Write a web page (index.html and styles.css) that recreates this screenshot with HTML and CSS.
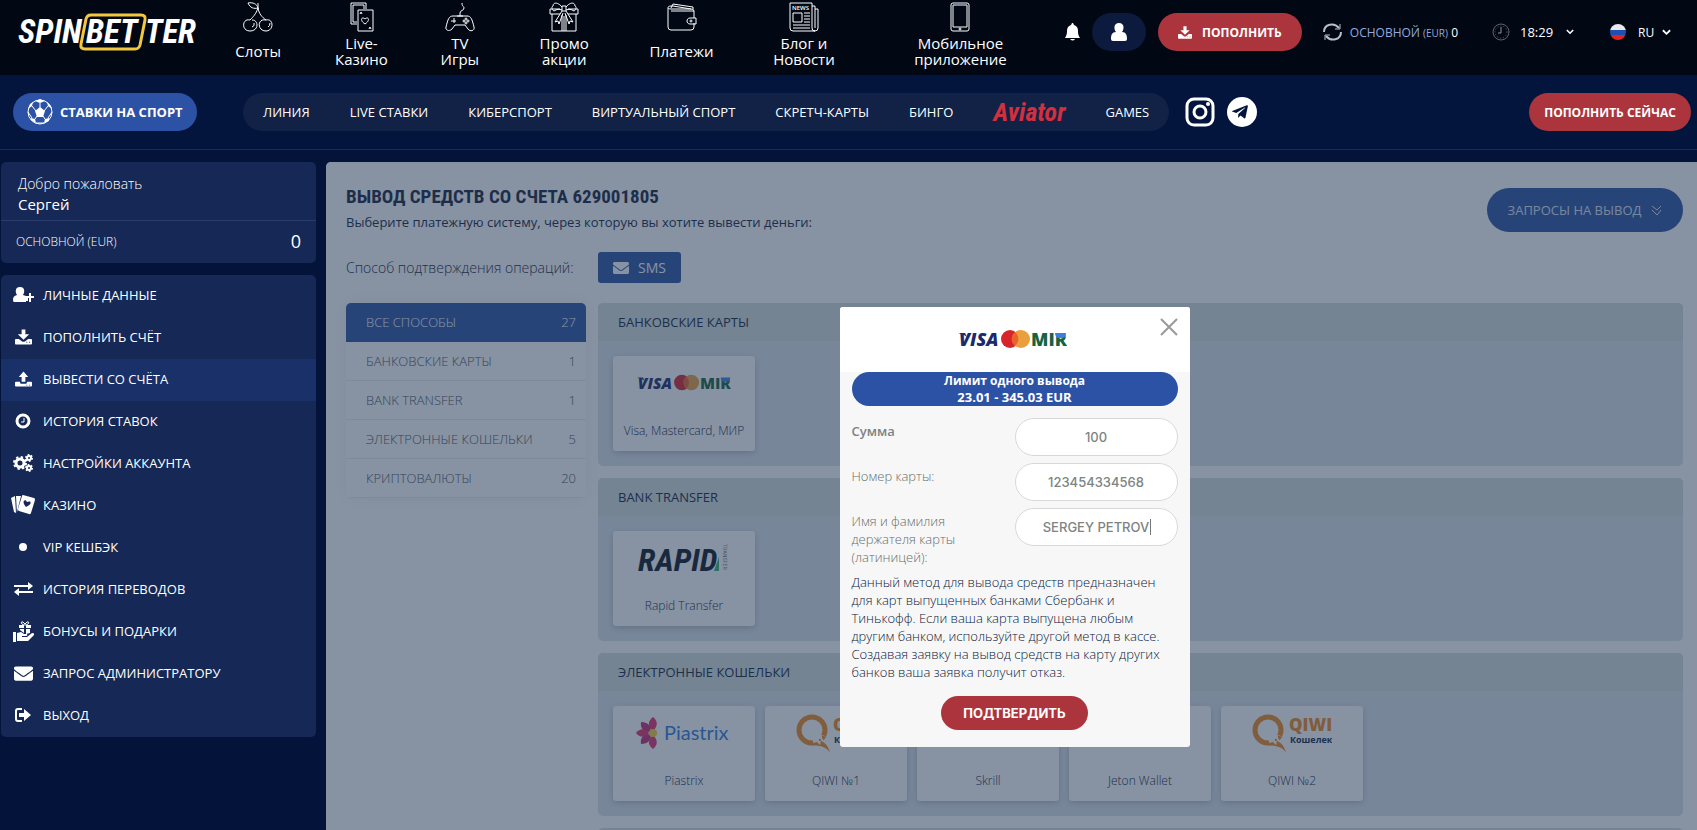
FILE: index.html
```html
<!DOCTYPE html>
<html lang="ru">
<head>
  <meta charset="UTF-8" />
  <meta name="viewport" content="width=device-width, initial-scale=1" />
  <title>SpinBetter - Вывод средств</title>
  <link rel="stylesheet" href="styles.css">
</head>
<body>
  <svg class="sprite" aria-hidden="true">
    <symbol id="qiwi" viewBox="0 0 38 38">
      <circle cx="16" cy="16" r="13" fill="none" stroke="#f08a1d" stroke-width="5" />
      <path fill="#f08a1d" d="M12 31c8 1 15-1 22 7-3-9-8-12-14-12z" />
      <path fill="#fff" d="M17 20l4 1 3-3 1 3 4 1-3 2 3 4-4-1-1 4-3-3-4 1z" />
      <path fill="#f08a1d" d="M23 25h2v2h-2zM26 22h2v2h-2z" />
    </symbol>
    <symbol id="mail" viewBox="0 64 512 384">
      <path d="M502.300 190.800c3.900-3.100 9.700-.2 9.700 4.700V400c0 26.500-21.500 48-48 48H48c-26.500 0-48-21.500-48-48V195.600c0-5 5.700-7.800 9.700-4.700 22.400 17.400 52.100 39.500 154.100 113.600 21.100 15.400 56.700 47.800 92.200 47.600 35.700.3 72-32.800 92.300-47.600 102-74.100 131.600-96.300 154-113.700zM256 320c23.200.4 56.600-29.200 73.400-41.400 132.700-96.300 142.800-104.700 173.400-128.700 5.800-4.500 9.200-11.500 9.200-18.900v-19c0-26.500-21.500-48-48-48H48c-26.500 0-48 21.500-48 48v19c0 7.400 3.400 14.300 9.200 18.900 30.600 23.900 40.700 32.400 173.400 128.700 16.800 12.200 50.200 41.800 73.400 41.400z" />
    </symbol>
    <symbol id="download" viewBox="0 0 18 16">
      <path fill-rule="evenodd" d="M7 0h4v5h4L9 11 3 5h4zM1 10h3l4 3h2l4-3h3q1 0 1 1v4q0 1-1 1H1q-1 0-1-1v-4q0-1 1-1zM12 13v1h1v-1zM15 13v1h1v-1z" />
    </symbol>
    <symbol id="chevron" viewBox="0 0 10 7">
      <path d="M1 1l4 4 4-4" fill="none" stroke="#fff" stroke-width="2" />
    </symbol>
  </svg>

  <header class="top">
    <a href="#" class="logo" aria-label="SpinBetter">
      <svg width="180" height="40" viewBox="0 0 180 40">
        <text x="0" y="32" class="t-logo">SPIN</text>
        <path d="M73 4h50q5 0 4 5l-5 25q-1 4-5 4H67q-5 0-4-5l5-25q1-4 5-4z" fill="none" stroke="#f2c83f" stroke-width="3" />
        <text x="68" y="32" class="t-logo">BET</text>
        <text x="127" y="32" class="t-logo">TER</text>
      </svg>
    </a>

    <nav class="top-nav">
      <a href="#">
        <svg class="line-icon" viewBox="0 0 30 30"><path d="M5 1c5-1 9 1 10 5-4 1-8 0-10-5zM15 1v6M15 6C13 12 10 15 7 18M15 6c1 6 4 9 8 12M7 18c-8-2-9 11 0 11 9 0 9-11 2-11M23 18c-9-2-9 11 0 11 8 0 8-13 0-11M9 25q3-1 2-4M25 25q2-1 2-4" /></svg>
        <span>Слоты</span>
      </a>
      <a href="#">
        <svg class="line-icon" viewBox="0 0 30 30"><path d="M10 22H4V1h15v6M10 20H6V3h11v4M11 8h15v21H11zM13 12l1-2 1 2M22 27l1-2 1 2M18 22c-6-4-3-8 0-5 3-3 6 1 0 5z" /></svg>
        <span>Live-<br>Казино</span>
      </a>
      <a href="#">
        <svg class="line-icon" viewBox="0 0 30 30"><path d="M15 14v-3c0-3 4-2 4-5 0-2-2-1-2-5M12 14h6M8 14h14c4 0 5 3 7 11 1 4-4 5-6 2l-3-4H10l-3 4c-3 3-7 1-6-2 2-8 3-11 7-11zM9 16v5M6 19h5" /><circle cx="21" cy="17" r="1" /><circle cx="21" cy="21" r="1" /><circle cx="19" cy="19" r="1" /><circle cx="23" cy="19" r="1" /></svg>
        <span>TV<br>Игры</span>
      </a>
      <a href="#">
        <svg class="line-icon" viewBox="0 0 30 30"><path d="M3 12v17h24V12M11 7H1v5h10M19 7h10v5H19M13 4h4v5h-4zM13 5C9 0 4 0 4 4c-2 1-1 4 1 5 3-2 5-2 8-1M17 5c4-5 9-5 9-1 2 1 1 4-1 5-3-2-5-2-8-1M13 9L6 20l3-1 1 3 4-11M17 9l7 11-3-1-1 3-4-11M13 13v16M17 13v16M15 14v15" /></svg>
        <span>Промо<br>акции</span>
      </a>
      <a href="#">
        <svg class="line-icon" viewBox="0 0 30 30"><path d="M27 16V9q0-2-3-2H4C0 7 0 4 4 4h2M1 6v19q0 3 3 3h20q3 0 3-3v-4M4 9h23M4 6l2-4 20 3v2M6 4l18 3M29 16h-6c-4 0-4 6 0 6h6z" /><circle cx="24" cy="19" r="1" /></svg>
        <span>Платежи</span>
      </a>
      <a href="#">
        <svg class="line-icon" viewBox="0 0 30 30"><path d="M1 1h22v25q0 3 3 3H4q-3 0-3-3zM23 4h3v22M26 7h3v19q0 3-3 3-2 0-3-2M4 11h9v9H4zM15 11h6M15 14h6M15 17h6M15 20h6M4 23h17M4 26h17" /><text x="3" y="8" class="t-news">NEWS</text></svg>
        <span>Блог и<br>Новости</span>
      </a>
      <a href="#">
        <svg class="line-icon" viewBox="0 0 30 30"><path d="M8 1h14q2 0 2 2v24q0 2-2 2H8q-2 0-2-2V3q0-2 2-2zM8 3h14v22H8z" /><circle cx="15" cy="27" r="1" /></svg>
        <span>Мобильное<br>приложение</span>
      </a>
    </nav>

    <div class="top-right">
      <button class="plain bell" aria-label="Уведомления">
        <svg width="15" height="18" viewBox="0 0 15 18"><path fill="#fff" d="M7 0h1l1 2c3 1 4 3 4 6 0 4 1 5 2 7H0c1-2 2-3 2-7 0-3 1-5 4-6zM5 16h5q-2 3-5 0z" /></svg>
      </button>
      <button class="user-btn" aria-label="Профиль">
        <svg width="16" height="18" viewBox="0 0 16 18"><path fill="#fff" d="M8 0c6 0 5 7 3 9 4 0 5 3 5 7q0 2-2 2H2q-2 0-2-2c0-4 1-7 5-7C3 7 2 0 8 0z" /></svg>
      </button>
      <button class="red-btn deposit"><svg width="14" height="13" fill="#fff"><use href="#download" /></svg>Пополнить</button>
      <div class="balance">
        <svg width="19" height="18" viewBox="0 0 19 18" fill="none" stroke="#b9bec9" stroke-width="2"><path d="M1 9c0-8 10-10 15-4M18 9c0 8-10 10-15 4" /><path d="M17 1v5h-5M2 17v-5h5" stroke-width="1" /></svg>
        <span>ОСНОВНОЙ <small>(EUR)</small> <b>0</b></span>
      </div>
      <label class="picker time">
        <svg width="18" height="18" viewBox="0 0 18 18" fill="none" stroke="#5b6270"><circle cx="9" cy="9" r="8" /><circle cx="9" cy="9" r="6" stroke-dasharray="1 2" /><path d="M9 4v6H6" stroke="#8b92a0" /></svg>
        <select aria-label="Время"><option>18:29</option></select>
        <svg width="8" height="6"><use href="#chevron" /></svg>
      </label>
      <label class="picker lang">
        <svg width="17" height="17" viewBox="0 0 17 17"><clipPath id="flag"><circle cx="8" cy="8" r="8" /></clipPath><g clip-path="url(#flag)"><path fill="#e8eaf0" d="M0 0h17v6H0z" /><path fill="#1f4fb0" d="M0 6h17v5H0z" /><path fill="#e2231f" d="M0 11h17v6H0z" /></g></svg>
        <select aria-label="Язык"><option>RU</option></select>
        <svg width="9" height="7"><use href="#chevron" /></svg>
      </label>
    </div>
  </header>

  <div class="subbar">
    <a href="#" class="sport-btn">
      <svg width="26" height="26" viewBox="0 0 26 26"><circle cx="13" cy="13" r="12" fill="none" stroke="#fff" /><path fill="#fff" d="M13 8l5 4-2 6h-6l-2-6zM8 2l5 2 5-2-5-2zM1 10l4-3 1-4-3 2zM25 10l-4-3-1-4 4 4zM4 19l4 1 1 4-5-3zM22 19l-4 1-1 4 5-2z" /><path fill="none" stroke="#fff" d="M13 4v5M5 7l4 5M21 7l-4 5M8 20l2-3M18 20l-2-3M1 13l4 6M25 13l-4 6M9 24h8" /></svg>
      Ставки на спорт
    </a>
    <nav class="sub-nav">
      <a href="#">Линия</a>
      <a href="#">Live ставки</a>
      <a href="#">Киберспорт</a>
      <a href="#">Виртуальный спорт</a>
      <a href="#">Скретч-карты</a>
      <a href="#">Бинго</a>
      <a href="#" class="aviator">Aviator</a>
      <a href="#">Games</a>
    </nav>
    <div class="socials">
      <a href="#" aria-label="Instagram"><svg width="30" height="30" viewBox="0 0 30 30" fill="none" stroke="#fff" stroke-width="3"><rect x="2" y="2" width="26" height="26" rx="7" /><circle cx="15" cy="15" r="6" /><circle cx="23" cy="7" r="2" fill="#fff" stroke="none" /></svg></a>
      <a href="#" aria-label="Telegram"><svg width="30" height="30" viewBox="0 0 30 30"><circle cx="15" cy="15" r="15" fill="#fff" /><svg x="4" y="6" width="18" height="18" viewBox="0 0 448 512"><path fill="#03153d" d="M446.700 98.600l-67.600 318.800c-5.100 22.500-18.400 28.100-37.300 17.500l-103-75.900-49.700 47.800c-5.500 5.500-10.100 10.100-20.700 10.100l7.400-104.900 190.900-172.500c8.300-7.400-1.800-11.500-12.900-4.100L117.800 284 16.200 252.200c-22.100-6.900-22.500-22.100 4.600-32.700L418.200 66.400c18.400-6.900 34.500 4.100 28.500 32.200z" /></svg></svg></a>
    </div>
    <button class="red-btn now">Пополнить сейчас</button>
  </div>

  <div class="container">
    <aside class="sidebar">
      <div class="profile">
        <div class="hello">Добро пожаловать<strong>Сергей</strong></div>
        <div class="wallet"><span>ОСНОВНОЙ (EUR)</span><b>0</b></div>
      </div>
      <nav class="menu">
        <a href="#"><svg width="21" height="16" viewBox="0 0 21 16"><path d="M7 0c5 0 5 5 3 8l3 1v2h2v3h-2v1H1q-1 0-1-2c0-3 1-4 4-5C2 5 2 0 7 0zM16 6h2v3h3v2h-3v4h-2v-4h-3V9h3z" /></svg>Личные данные</a>
        <a href="#"><svg width="17" height="16"><use href="#download" /></svg>Пополнить счёт</a>
        <a href="#" class="active"><svg width="17" height="16" viewBox="0 0 18 16"><path fill-rule="evenodd" d="M9 0l5 6h-3v5H7V6H4zM1 11h4l1 2h6l1-2h4q1 0 1 1v3q0 1-1 1H1q-1 0-1-1v-3q0-1 1-1zM12 14v1h1v-1zM15 14v1h1v-1z" /></svg>Вывести со счёта</a>
        <a href="#"><svg width="16" height="16" viewBox="0 0 16 16" class="stroked"><circle cx="8" cy="8" r="6" stroke-width="3" /><path d="M9 5v4H6" stroke-width="1" /></svg>История ставок</a>
        <a href="#"><svg width="20" height="18" viewBox="0 0 20 18" class="stroked"><circle cx="7" cy="9" r="4" stroke-width="3" /><circle cx="7" cy="9" r="6" stroke-width="2" stroke-dasharray="2.360 2.350" /><circle cx="16" cy="4" r="2" stroke-width="2" /><circle cx="16" cy="4" r="3" stroke-width="2" stroke-dasharray="1.570" /><circle cx="16" cy="14" r="2" stroke-width="2" /><circle cx="16" cy="14" r="3" stroke-width="2" stroke-dasharray="1.570" /></svg>Настройки аккаунта</a>
        <a href="#"><svg width="24" height="20" viewBox="0 0 24 20"><path fill-rule="evenodd" d="M0 3l4-2 1 17-2-1zM5 1h5L6 17v2zM12 0l11 3q1 0 1 2l-4 13q-1 2-2 1L8 16q-1 0-1-2l4-13q0-1 1-1zM15 12c7-3 5-7 1-5-2-4-6 0-1 5z" /></svg>Казино</a>
        <a href="#"><svg width="8" height="8"><circle cx="4" cy="4" r="4" /></svg>VIP кешбэк</a>
        <a href="#"><svg width="19" height="14" viewBox="0 0 19 14"><path d="M0 3h14V0l5 4-5 4V5H0zM19 9H5V6l-5 4 5 4v-3h14z" /></svg>История переводов</a>
        <a href="#"><svg width="21" height="21" viewBox="0 0 21 21"><path d="M0 11h3v10H0zM4 12l4-1 3 2h3q1 2-1 2H9v1h5l5-4q3 0 2 2l-6 6H4zM6 4h5v3H6zM13 4h5v3h-5zM7 8h4v4L7 9zM13 8h4v4l-4 1z" /><path d="M12 4C8 4 7 0 10 1l2 2 2-2c3-1 2 3-2 3z" fill="none" stroke="#fff" /></svg>Бонусы и подарки</a>
        <a href="#"><svg width="19" height="15"><use href="#mail" /></svg>Запрос администратору</a>
        <a href="#"><svg width="16" height="14" viewBox="0 0 16 14"><path d="M7 1H3Q1 1 1 3v8q0 2 2 2h4" fill="none" stroke="#fff" stroke-width="2" /><path d="M4 5h5V1l7 6-7 6V9H4z" /></svg>Выход</a>
      </nav>
    </aside>

    <main class="main">
      <div class="main-head">
        <div>
          <h1>Вывод средств со счета 629001805</h1>
          <p>Выберите платежную систему, через которую вы хотите вывести деньги:</p>
        </div>
        <button class="requests">Запросы на вывод
          <svg width="11" height="11" viewBox="0 0 11 11" fill="none" stroke="#dfe5f2"><path d="M1 1l5 4 4-4M1 5l5 5 4-5" /></svg>
        </button>
      </div>
      <div class="confirm">
        <span>Способ подтверждения операций:</span>
        <button class="sms"><svg width="16" height="12"><use href="#mail" /></svg>SMS</button>
      </div>

      <div class="methods">
        <nav class="filters">
          <a href="#" class="active">Все способы<span>27</span></a>
          <a href="#">Банковские карты<span>1</span></a>
          <a href="#">Bank transfer<span>1</span></a>
          <a href="#">Электронные кошельки<span>5</span></a>
          <a href="#">Криптовалюты<span>20</span></a>
        </nav>
        <div class="groups">
          <section class="group">
            <h2>Банковские карты</h2>
            <div class="cards">
              <a href="#" class="card">
                <svg width="94" height="17" viewBox="0 0 109 19">
                  <path d="M0 3h7l2 4C7 5 4 4 0 3z" fill="#1a2a6c" />
                  <text x="1" y="16" class="t-visa">VISA</text>
                  <circle cx="52" cy="9" r="9" fill="#d8232a" />
                  <circle cx="63" cy="9" r="9" fill="#eb9f3c" />
                  <path d="M57 2a9 9 0 0 1 0 14a9 9 0 0 1 0-14z" fill="#e9632c" />
                  <text x="73" y="16" class="t-mir">MIR</text>
                  <path d="M97 3h11c0 4-2 5-4 5h-3c-2 0-4-2-4-5z" fill="#3c7fe0" />
                </svg>
                <span>Visa, Mastercard, МИР</span>
              </a>
            </div>
          </section>
          <section class="group">
            <h2>Bank transfer</h2>
            <div class="cards">
              <a href="#" class="card">
                <svg width="94" height="30" viewBox="0 0 94 30"><text x="1" y="28" class="t-rapid">RAPID</text><path d="M77 28l5-14v14z" fill="#35b46a" /><text class="t-transfer" transform="translate(86 1) rotate(90)">TRANSFER</text></svg>
                <span>Rapid Transfer</span>
              </a>
            </div>
          </section>
          <section class="group">
            <h2>Электронные кошельки</h2>
            <div class="cards">
              <a href="#" class="card">
                <svg width="98" height="34" viewBox="0 0 98 34">
                  <g fill="#e0306e"><path d="M18 15c-6-5-5-10 0-14 5 4 5 9 0 14zM18 19c-6 5-5 10 0 14 5-4 5-9 0-14z" /><path d="M16 16C9 16 5 13 6 6c7 0 10 4 10 10zM16 18c-7 0-11 3-10 10 7 0 10-4 10-10z" fill="#c72a72" /><path d="M14 17c-4 5-9 5-13 0 4-5 9-5 13 0z" /></g>
                  <circle cx="18" cy="17" r="4" fill="#f3cf3a" />
                  <text x="29" y="24" class="t-piastrix">Piastrix</text>
                </svg>
                <span>Piastrix</span>
              </a>
              <a href="#" class="card"><svg width="80" height="38" viewBox="0 0 80 38"><use href="#qiwi" width="38" height="38" /><text x="37" y="17" class="t-qiwi">QIWI</text><text x="38" y="29" class="t-qiwi-sub">Кошелек</text></svg><span>QIWI №1</span></a>
              <a href="#" class="card"><svg width="84" height="32" viewBox="0 0 84 32"><text x="1" y="28" class="t-skrill">Skrill</text></svg><span>Skrill</span></a>
              <a href="#" class="card"><svg width="84" height="32" viewBox="0 0 84 32"><text x="4" y="24" class="t-jeton">Jeton</text></svg><span>Jeton Wallet</span></a>
              <a href="#" class="card"><svg width="80" height="38" viewBox="0 0 80 38"><use href="#qiwi" width="38" height="38" /><text x="37" y="17" class="t-qiwi">QIWI</text><text x="38" y="29" class="t-qiwi-sub">Кошелек</text></svg><span>QIWI №2</span></a>
            </div>
          </section>
          <section class="group">
            <h2>Криптовалюты</h2>
          </section>
        </div>
      </div>

      <div class="overlay">
        <form class="modal">
          <div class="modal-head">
            <svg width="109" height="19" viewBox="0 0 109 19">
              <path d="M0 3h7l2 4C7 5 4 4 0 3z" fill="#1a2a6c" />
              <text x="1" y="16" class="t-visa">VISA</text>
              <circle cx="52" cy="9" r="9" fill="#d8232a" />
              <circle cx="63" cy="9" r="9" fill="#eb9f3c" />
              <path d="M57 2a9 9 0 0 1 0 14a9 9 0 0 1 0-14z" fill="#e9632c" />
              <text x="73" y="16" class="t-mir">MIR</text>
              <path d="M97 3h11c0 4-2 5-4 5h-3c-2 0-4-2-4-5z" fill="#3c7fe0" />
            </svg>
            <button type="button" class="close" aria-label="Закрыть"><svg width="18" height="18" viewBox="0 0 18 18"><path d="M1 1l16 16M17 1L1 17" stroke="#999" stroke-width="2" /></svg></button>
          </div>
          <div class="modal-body">
            <div class="limit">Лимит одного вывода<span>23.01 - 345.03 EUR</span></div>
            <div class="field"><label for="sum" class="bold">Сумма</label><input id="sum" type="text" value="100"></div>
            <div class="field"><label for="card">Номер карты:</label><input id="card" type="text" value="123454334568"></div>
            <div class="field"><label for="holder">Имя и фамилия держателя карты (латиницей):</label><div class="typing"><input id="holder" type="text" value="SERGEY PETROV"></div></div>
            <p>Данный метод для вывода средств предназначен для карт выпущенных банками Сбербанк и Тинькофф. Если ваша карта выпущена любым другим банком, используйте другой метод в кассе. Создавая заявку на вывод средств на карту других банков ваша заявка получит отказ.</p>
            <button type="submit" class="red-btn submit">Подтвердить</button>
          </div>
        </form>
      </div>
    </main>
  </div>
</body>
</html>
```

FILE: styles.css
```css
* {
  box-sizing: border-box;
}
body {
  margin: 0;
  height: 100vh;
  overflow: hidden;
  display: flex;
  flex-direction: column;
  font-family: "Open Sans", "Noto Sans", sans-serif;
  font-size: 14px;
  color: #fff;
  background: #03133a;
}
a {
  color: inherit;
  text-decoration: none;
}
button, input, select {
  font-family: inherit;
  font-size: inherit;
  color: inherit;
  border: none;
  padding: 0;
  cursor: pointer;
}
svg {
  display: block;
  flex-shrink: 0;
}
.sprite {
  position: absolute;
  width: 0;
  height: 0;
}

/* Шапка */
.top {
  display: flex;
  align-items: flex-start;
  height: 75px;
  flex-shrink: 0;
  background: #010814;
  padding-right: 26px;
}
.logo {
  padding: 11px 8px 0 18px;
}
.top-nav {
  flex: 1;
  display: grid;
  grid-template-columns: 104fr 102fr 94fr 114fr 120fr 124fr 188fr 10fr;
}
.top-nav a {
  display: flex;
  flex-direction: column;
  align-items: center;
  padding-top: 2px;
  font-size: 15px;
  font-weight: 500;
  line-height: 16px;
  text-align: center;
}
.top-nav span {
  display: flex;
  flex-direction: column;
  justify-content: center;
  height: 32px;
  margin-top: 3px;
}
.line-icon {
  width: 30px;
  height: 30px;
  fill: none;
  stroke: #fff;
}
.top-right {
  display: flex;
  align-items: center;
  height: 38px;
  margin-top: 13px;
  font-weight: 500;
}
.plain {
  background: none;
}
.user-btn {
  display: flex;
  align-items: center;
  justify-content: center;
  width: 54px;
  height: 38px;
  margin: 0 12px;
  border-radius: 19px;
  background: #0b1a3d;
}
.red-btn {
  background: #ac343d;
  border-radius: 20px;
  color: #fff;
  font-weight: 700;
  font-size: 12px;
  text-transform: uppercase;
}
.deposit {
  display: flex;
  align-items: center;
  justify-content: center;
  gap: 10px;
  width: 144px;
  height: 38px;
}
.balance {
  display: flex;
  align-items: center;
  gap: 8px;
  margin-left: 21px;
  font-size: 12px;
  color: #93a9dc;
  white-space: nowrap;
}
.balance span {
  font-weight: 400;
}
.balance small {
  font-size: 10px;
}
.balance b {
  font-size: 12px;
  font-weight: 500;
  color: #fff;
}
.picker {
  display: flex;
  align-items: center;
}
.picker select {
  appearance: none;
  background: none;
  color: #fff;
}
.time {
  margin-left: 34px;
}
.time select {
  margin: 0 12px 0 10px;
  font-size: 13px;
}
.lang {
  margin-left: 36px;
}
.lang select {
  margin: 0 7px 0 11px;
  font-size: 12px;
}

.subbar {
  display: flex;
  align-items: center;
  height: 75px;
  flex-shrink: 0;
  padding: 0 6px 0 13px;
  background: #03153d;
  border-bottom: 1px solid #1a2a50;
}
.sport-btn {
  display: flex;
  align-items: center;
  gap: 7px;
  width: 184px;
  height: 38px;
  padding-left: 14px;
  border-radius: 19px;
  background: #2c52a5;
  font-size: 13px;
  font-weight: 700;
  text-transform: uppercase;
  white-space: nowrap;
}
.sub-nav {
  display: flex;
  align-items: center;
  gap: 40px;
  height: 38px;
  margin-left: 46px;
  padding: 0 20px;
  border-radius: 19px;
  background: #112246;
  font-size: 13px;
  font-weight: 500;
  text-transform: uppercase;
  white-space: nowrap;
}
.sub-nav .aviator {
  font-family: "Roboto Condensed", "Liberation Sans Narrow", Roboto, sans-serif;
  font-size: 26px;
  font-style: italic;
  font-weight: 700;
  text-transform: none;
  color: #d0303f;
}
.socials {
  display: flex;
  gap: 12px;
  margin-left: 16px;
}
.now {
  width: 162px;
  height: 38px;
  margin-left: auto;
}

.container {
  flex: 1;
  display: flex;
  gap: 10px;
  min-height: 0;
  padding: 12px 0 0 1px;
}

/* Левая панель */
.sidebar {
  width: 315px;
  flex-shrink: 0;
}
.profile, .menu {
  background: #152856;
  border-radius: 5px;
  overflow: hidden;
}
.profile {
  margin-bottom: 12px;
}
.hello {
  height: 59px;
  padding: 12px 17px 0;
  line-height: 20px;
  font-weight: 300;
  border-bottom: 1px solid #2a3c6b;
}
.hello strong {
  display: block;
  font-size: 15px;
  font-weight: 500;
}
.wallet {
  display: flex;
  align-items: center;
  justify-content: space-between;
  height: 42px;
  padding: 0 15px 2px;
  font-size: 12px;
  font-weight: 300;
}
.wallet b {
  font-size: 18px;
  font-weight: 500;
}
.menu a {
  display: grid;
  grid-template-columns: 24px auto;
  gap: 8px;
  align-items: center;
  justify-items: center;
  justify-content: start;
  height: 42px;
  padding: 0 0 2px 10px;
  font-size: 13px;
  font-weight: 500;
  text-transform: uppercase;
  fill: #fff;
}
.menu .active {
  background: #193069;
}
.menu .stroked {
  fill: none;
  stroke: #fff;
}

/* Основная часть */
.main {
  position: relative;
  flex: 1;
  min-width: 0;
  overflow: hidden;
  padding: 23px 14px 0 20px;
  background: #fff;
  border-top-left-radius: 5px;
  color: #14233f;
}
.main-head {
  display: flex;
  justify-content: space-between;
  align-items: flex-end;
}
.main-head h1 {
  margin: 0;
  font-family: "Roboto Condensed", "Liberation Sans Narrow", Roboto, sans-serif;
  font-size: 19px;
  line-height: 24px;
  text-transform: uppercase;
}
.main-head p {
  margin: 3px 0 0;
  font-size: 13px;
  line-height: 20px;
}
.requests {
  display: flex;
  align-items: center;
  justify-content: center;
  gap: 10px;
  width: 196px;
  height: 44px;
  border-radius: 22px;
  background: #2c52a5;
  color: #dfe5f2;
  font-size: 13px;
  text-transform: uppercase;
}
.confirm {
  display: flex;
  align-items: center;
  margin: 20px 0;
  font-weight: 300;
}
.confirm span {
  width: 252px;
}
.sms {
  display: flex;
  align-items: center;
  gap: 9px;
  height: 31px;
  padding: 0 15px;
  border-radius: 3px;
  background: #2c52a5;
  color: #fff;
  fill: #fff;
}
.methods {
  display: flex;
  align-items: flex-start;
  gap: 12px;
}
.filters {
  width: 240px;
  flex-shrink: 0;
  border-radius: 5px;
  overflow: hidden;
  box-shadow: 0 0 20px rgba(0, 0, 0, 0.06);
}
.filters a {
  display: flex;
  align-items: center;
  justify-content: space-between;
  height: 39px;
  padding: 0 10px 0 20px;
  border-bottom: 1px solid #e9edf0;
  font-size: 13px;
  font-weight: 300;
  color: #4a5462;
  text-transform: uppercase;
}
.filters .active {
  border-color: #2c52a5;
  background: #2c52a5;
  color: #fff;
}
.groups {
  flex: 1;
}
.group {
  margin-bottom: 12px;
  border-radius: 5px;
  overflow: hidden;
  background: #dee5ee;
}
.group h2 {
  margin: 0;
  padding: 0 20px;
  font-size: 13px;
  font-weight: 400;
  line-height: 38px;
  text-transform: uppercase;
  background: #d5e0de;
}
.cards {
  display: flex;
  gap: 10px;
  padding: 15px;
}
.card {
  display: flex;
  flex-direction: column;
  justify-content: space-between;
  align-items: center;
  width: 142px;
  height: 95px;
  padding: 8px 0 10px;
  border-radius: 3px;
  background: #fff;
  box-shadow: 0 2px 6px rgba(0, 0, 0, 0.2);
  font-size: 12px;
  font-weight: 300;
}
.card svg {
  height: 38px;
}
.card span {
  line-height: 20px;
}

/* Окно вывода */
.overlay {
  position: absolute;
  inset: 0;
  display: flex;
  justify-content: center;
  align-items: flex-start;
  padding: 145px 14px 0 20px;
  background: rgba(37, 57, 86, 0.55);
}
.modal {
  width: 350px;
  border-radius: 3px;
  overflow: hidden;
  background: #f7f7f7;
}
.modal-head {
  position: relative;
  display: flex;
  justify-content: center;
  align-items: center;
  height: 65px;
  padding-right: 4px;
  background: #fff;
}
.close {
  position: absolute;
  top: 11px;
  right: 12px;
  background: none;
}
.modal-body {
  padding: 0 12px 17px;
  font-size: 13px;
}
.limit {
  height: 34px;
  margin-bottom: 12px;
  border-radius: 17px;
  background: #2c52a5;
  color: #fff;
  font-size: 12px;
  font-weight: 700;
  line-height: 17px;
  text-align: center;
}
.limit span {
  display: block;
  font-size: 13px;
}
.field {
  display: grid;
  grid-template-columns: 1fr 1fr;
  margin-bottom: 7px;
  line-height: 18px;
}
.field label {
  padding: 4px 40px 0 0;
  color: #666c6c;
  font-weight: 300;
}
.field .bold {
  color: #7d8282;
  font-weight: 600;
}
.field input {
  width: 100%;
  height: 38px;
  border: 1px solid #d8d8d8;
  border-radius: 19px;
  background: #fff;
  color: #7d8482;
  font-family: Inter, sans-serif;
  font-size: 13px;
  font-weight: 500;
  text-align: center;
}
.typing {
  position: relative;
}
/* курсор ввода */
.typing::after {
  content: "";
  position: absolute;
  top: 11px;
  left: calc(50% + 54px);
  width: 1px;
  height: 16px;
  background: #777;
}
.modal-body p {
  margin: 0;
  line-height: 18px;
  font-weight: 300;
  color: #0a1a40;
}
.submit {
  display: block;
  width: 147px;
  height: 34px;
  margin: 15px auto 0;
  font-family: Inter, sans-serif;
  font-size: 13px;
}

/* Надписи логотипов */
.t-logo, .t-rapid {
  font-family: "Roboto Condensed", "Liberation Sans Narrow", Roboto, sans-serif;
  font-style: italic;
  font-weight: 700;
}
.t-logo {
  font-size: 33px;
  fill: #fff;
}
.t-rapid {
  font-size: 32px;
  fill: #0a1522;
}
.t-transfer {
  font-family: "Roboto Condensed", "Liberation Sans Narrow", Roboto, sans-serif;
  font-size: 6px;
  fill: #35404e;
}
.t-visa, .t-mir {
  font-size: 18px;
  font-weight: 800;
}
.t-visa {
  font-style: italic;
  fill: #1a2a6c;
}
.t-mir {
  fill: #17633f;
}
.t-news {
  font-size: 6px;
  font-weight: 600;
  fill: #fff;
  stroke: none;
}
.t-qiwi {
  font-size: 17px;
  font-weight: 800;
  fill: #f08a1d;
}
.t-qiwi-sub {
  font-size: 9px;
  font-weight: 700;
  fill: #0e1f45;
}
.t-piastrix {
  font-family: Lato, sans-serif;
  font-size: 20px;
  font-weight: 400;
  fill: #2f7de0;
}
.t-skrill {
  font-size: 28px;
  font-weight: 700;
  fill: #862165;
}
.t-jeton {
  font-size: 22px;
  font-weight: 700;
  fill: #f4511e;
}
```
